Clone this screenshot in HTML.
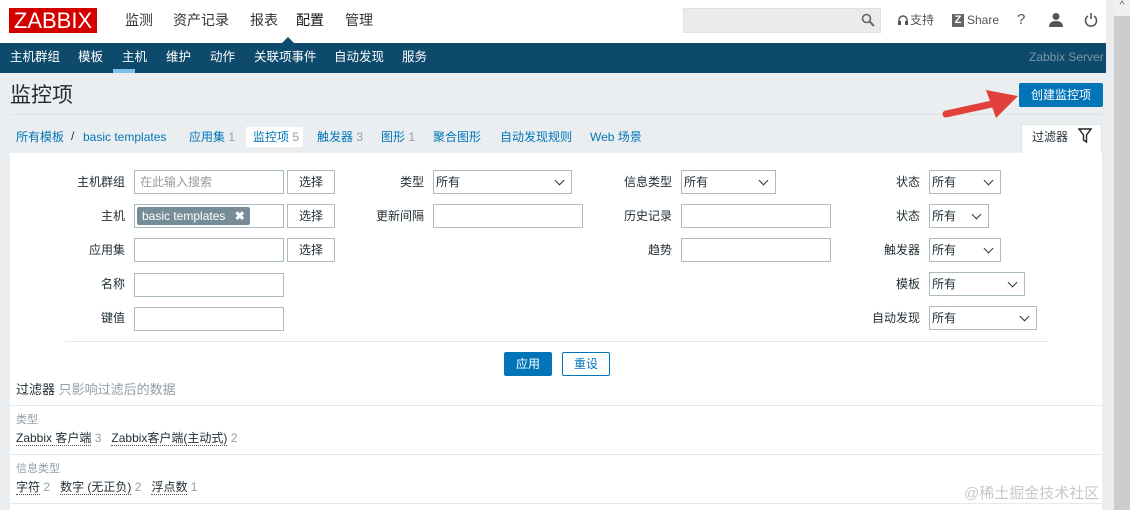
<!DOCTYPE html>
<html><head><meta charset="utf-8"><style>
*{box-sizing:border-box;margin:0;padding:0}
body{width:1130px;height:510px;overflow:hidden;background:#ebeef0;font-family:"Liberation Sans","Noto Sans CJK SC",sans-serif;font-size:12px;color:#1f2c33;position:relative}
.a{position:absolute;white-space:nowrap;line-height:1.1}
.lnk{color:#0275b8}
.g{color:#929ea6}
.inp{position:absolute;height:24px;border:1px solid #acbbc0;background:#fff;font-size:12px;padding:0 5px;line-height:22px}
.btn{position:absolute;height:24px;border:1px solid #acbbc0;background:#fff;text-align:center;line-height:22px;font-size:12px;width:48px}
.sel{position:absolute;height:24px;border:1px solid #acbbc0;background:#fff;padding:0 2px;font-size:12px;line-height:22px}
.sel:after{content:"";position:absolute;right:8px;top:6px;width:6px;height:6px;border-right:1.5px solid #333;border-bottom:1.5px solid #333;transform:rotate(45deg)}
.lbl{position:absolute;text-align:right;font-size:12px;line-height:1.1}
.u{border-bottom:1px dotted #555}
</style></head><body>
<div class="a" style="left:0;top:0;width:1113px;height:43px;background:#fff"></div>
<div class="a" style="left:9px;top:8px;width:88px;height:25px;background:#d40000;color:#fff;font-size:22px;line-height:25px;text-align:center">ZABBIX</div>
<div class="a" style="left:125px;top:13px;font-size:14px;color:#333">监测</div>
<div class="a" style="left:173px;top:13px;font-size:14px;color:#333">资产记录</div>
<div class="a" style="left:250px;top:13px;font-size:14px;color:#333">报表</div>
<div class="a" style="left:296px;top:13px;font-size:14px;color:#111">配置</div>
<div class="a" style="left:345px;top:13px;font-size:14px;color:#333">管理</div>
<div class="a" style="left:282px;top:37px;width:0;height:0;border-left:6px solid transparent;border-right:6px solid transparent;border-bottom:6px solid #0e4a6b"></div>
<div class="a" style="left:683px;top:8px;width:198px;height:25px;background:#ebebeb;border:1px solid #e0e0e0"></div>
<svg class="a" style="left:861px;top:13px" width="14" height="14" viewBox="0 0 14 14"><circle cx="5.5" cy="5.5" r="4" fill="none" stroke="#666" stroke-width="1.6"/><path d="M8.5 8.5L13 13" stroke="#666" stroke-width="2"/></svg>
<svg class="a" style="left:897px;top:14px" width="12" height="14" viewBox="0 0 12 14"><path d="M2 9V6a4 4 0 0 1 8 0v3" fill="none" stroke="#555" stroke-width="1.5"/><rect x="1" y="7" width="3" height="4" fill="#555"/><rect x="8" y="7" width="3" height="4" fill="#555"/></svg>
<div class="a" style="left:910px;top:14px;color:#555">支持</div>
<div class="a" style="left:952px;top:14px;width:12px;height:13px;background:#666;color:#fff;font-size:11px;font-weight:bold;text-align:center;line-height:13px">Z</div>
<div class="a" style="left:967px;top:14px;color:#555">Share</div>
<div class="a" style="left:1017px;top:12px;font-size:15px;color:#555">?</div>
<svg class="a" style="left:1049px;top:12px" width="14" height="15" viewBox="0 0 14 15"><circle cx="7" cy="4.5" r="3.5" fill="#555"/><path d="M0 15q0-6 7-6t7 6z" fill="#555"/></svg>
<svg class="a" style="left:1084px;top:12px" width="14" height="15" viewBox="0 0 14 15"><path d="M4 4a5.5 5.5 0 1 0 6 0" fill="none" stroke="#555" stroke-width="1.6"/><path d="M7 1v6" stroke="#555" stroke-width="1.6"/></svg>
<div class="a" style="left:0;top:43px;width:1106px;height:30px;background:#0e4a6b"></div>
<div class="a" style="left:10px;top:51px;color:#fff;font-size:12.5px">主机群组</div>
<div class="a" style="left:78px;top:51px;color:#fff;font-size:12.5px">模板</div>
<div class="a" style="left:122px;top:51px;color:#fff;font-size:12.5px">主机</div>
<div class="a" style="left:113px;top:69px;width:22px;height:4px;background:#7cc0ea"></div>
<div class="a" style="left:166px;top:51px;color:#fff;font-size:12.5px">维护</div>
<div class="a" style="left:210px;top:51px;color:#fff;font-size:12.5px">动作</div>
<div class="a" style="left:254px;top:51px;color:#fff;font-size:12.5px">关联项事件</div>
<div class="a" style="left:334px;top:51px;color:#fff;font-size:12.5px">自动发现</div>
<div class="a" style="left:402px;top:51px;color:#fff;font-size:12.5px">服务</div>
<div class="a" style="left:1029px;top:51px;color:#7c95a5;font-size:12px">Zabbix Server</div>
<div class="a" style="left:1106px;top:0;width:24px;height:510px;background:#ebeef0"></div>
<div class="a" style="left:1114px;top:0;width:16px;height:510px;background:#cdcdcd"></div>
<div class="a" style="left:1114px;top:0;width:16px;height:16px;background:#f0f0f0;color:#555;font-size:10px;text-align:center">^</div>
<div class="a" style="left:10px;top:84px;font-size:21px;color:#1f2c33">监控项</div>
<div class="a" style="left:10px;top:114px;width:1093px;height:1px;background:#dde2e5"></div>
<div class="a" style="left:1019px;top:83px;width:84px;height:24px;background:#0275b8;border-radius:2px;color:#fff;text-align:center;line-height:24px;font-size:12px">创建监控项</div>
<svg class="a" style="left:940px;top:84px" width="80" height="36" viewBox="0 0 80 36"><path d="M6 30L52 20" stroke="#e2403a" stroke-width="7" stroke-linecap="round"/><path d="M46 6L78 12L56 34Z" fill="#e2403a"/></svg>
<div class="a lnk" style="left:16px;top:131px">所有模板</div>
<div class="a" style="left:71px;top:130px">/</div>
<div class="a lnk" style="left:83px;top:131px">basic templates</div>
<div class="a lnk" style="left:189px;top:131px">应用集 <span class="g">1</span></div>
<div class="a" style="left:246px;top:127px;width:57px;height:20px;background:#fff"></div>
<div class="a lnk" style="left:253px;top:131px">监控项 <span class="g">5</span></div>
<div class="a lnk" style="left:317px;top:131px">触发器 <span class="g">3</span></div>
<div class="a lnk" style="left:381px;top:131px">图形 <span class="g">1</span></div>
<div class="a lnk" style="left:433px;top:131px">聚合图形</div>
<div class="a lnk" style="left:500px;top:131px">自动发现规则</div>
<div class="a lnk" style="left:590px;top:131px">Web 场景</div>
<div class="a" style="left:1021px;top:124px;width:81px;height:30px;background:#fff;border:1px solid #dde2e5;border-bottom:none"></div>
<div class="a" style="left:1032px;top:131px">过滤器</div>
<svg class="a" style="left:1078px;top:128px" width="14" height="15" viewBox="0 0 14 15"><path d="M1 1h12L8.5 7v7l-3-2V7z" fill="none" stroke="#222" stroke-width="1.4"/></svg>
<div class="a" style="left:10px;top:153px;width:1092px;height:357px;background:#fff"></div>
<div class="lbl" style="left:60px;top:176px;width:65px">主机群组</div>
<div class="inp" style="left:134px;top:170px;width:150px;color:#999">在此输入搜索</div>
<div class="btn" style="left:287px;top:170px">选择</div>
<div class="lbl" style="left:60px;top:210px;width:65px">主机</div>
<div class="inp" style="left:134px;top:204px;width:150px"></div>
<div class="a" style="left:137px;top:207px;width:113px;height:18px;background:#768d99;color:#fff;border-radius:2px;padding:0 5px;line-height:18px">basic templates <b style="margin-left:6px">✖</b></div>
<div class="btn" style="left:287px;top:204px">选择</div>
<div class="lbl" style="left:60px;top:244px;width:65px">应用集</div>
<div class="inp" style="left:134px;top:238px;width:150px"></div>
<div class="btn" style="left:287px;top:238px">选择</div>
<div class="lbl" style="left:60px;top:278px;width:65px">名称</div>
<div class="inp" style="left:134px;top:273px;width:150px"></div>
<div class="lbl" style="left:60px;top:312px;width:65px">键值</div>
<div class="inp" style="left:134px;top:307px;width:150px"></div>
<div class="lbl" style="left:360px;top:176px;width:64px">类型</div>
<div class="sel" style="left:433px;top:170px;width:139px">所有</div>
<div class="lbl" style="left:360px;top:210px;width:64px">更新间隔</div>
<div class="inp" style="left:433px;top:204px;width:150px"></div>
<div class="lbl" style="left:600px;top:176px;width:72px">信息类型</div>
<div class="sel" style="left:681px;top:170px;width:95px">所有</div>
<div class="lbl" style="left:600px;top:210px;width:72px">历史记录</div>
<div class="inp" style="left:681px;top:204px;width:150px"></div>
<div class="lbl" style="left:600px;top:244px;width:72px">趋势</div>
<div class="inp" style="left:681px;top:238px;width:150px"></div>
<div class="lbl" style="left:850px;top:176px;width:70px">状态</div>
<div class="sel" style="left:929px;top:170px;width:72px">所有</div>
<div class="lbl" style="left:850px;top:210px;width:70px">状态</div>
<div class="sel" style="left:929px;top:204px;width:60px">所有</div>
<div class="lbl" style="left:850px;top:244px;width:70px">触发器</div>
<div class="sel" style="left:929px;top:238px;width:72px">所有</div>
<div class="lbl" style="left:850px;top:278px;width:70px">模板</div>
<div class="sel" style="left:929px;top:272px;width:96px">所有</div>
<div class="lbl" style="left:850px;top:312px;width:70px">自动发现</div>
<div class="sel" style="left:929px;top:306px;width:108px">所有</div>
<div class="a" style="left:65px;top:341px;width:983px;height:1px;background:#e6e9eb"></div>
<div class="a" style="left:504px;top:352px;width:48px;height:24px;background:#0275b8;color:#fff;text-align:center;line-height:24px;border-radius:2px">应用</div>
<div class="a" style="left:562px;top:352px;width:48px;height:24px;border:1px solid #0275b8;color:#0275b8;text-align:center;line-height:22px;border-radius:2px">重设</div>
<div class="a" style="left:16px;top:383px;font-size:13px">过滤器 <span class="g">只影响过滤后的数据</span></div>
<div class="a" style="left:10px;top:405px;width:1092px;height:1px;background:#e6e9eb"></div>
<div class="a g" style="left:16px;top:414px;font-size:11px">类型</div>
<div class="a" style="left:16px;top:432px"><span class="u">Zabbix 客户端</span> <span class="g">3</span>&nbsp;&nbsp; <span class="u">Zabbix客户端(主动式)</span> <span class="g">2</span></div>
<div class="a" style="left:10px;top:454px;width:1092px;height:1px;background:#e6e9eb"></div>
<div class="a g" style="left:16px;top:463px;font-size:11px">信息类型</div>
<div class="a" style="left:16px;top:481px"><span class="u">字符</span> <span class="g">2</span>&nbsp;&nbsp; <span class="u">数字 (无正负)</span> <span class="g">2</span>&nbsp;&nbsp; <span class="u">浮点数</span> <span class="g">1</span></div>
<div class="a" style="left:10px;top:503px;width:1092px;height:1px;background:#e6e9eb"></div>
<div class="a" style="left:964px;top:486px;font-size:15px;color:#c8c8c8">@稀土掘金技术社区</div>
</body></html>
